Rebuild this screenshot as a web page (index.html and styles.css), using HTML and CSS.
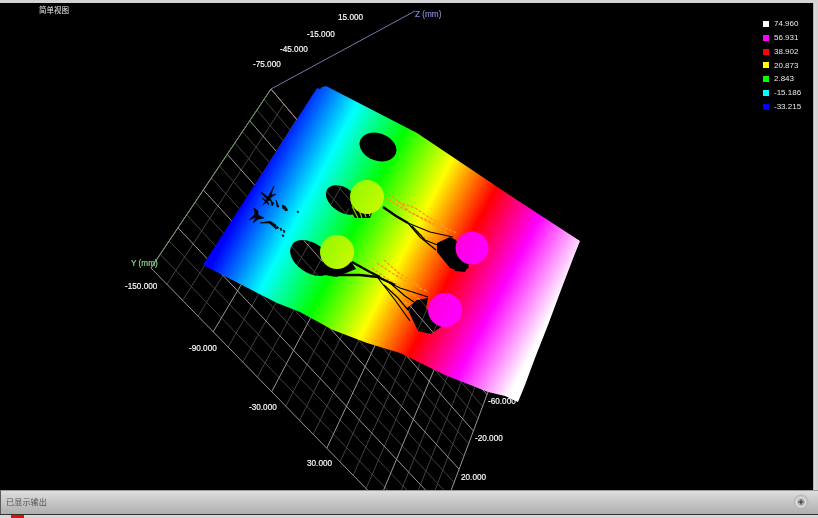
FILE: index.html
```html
<!DOCTYPE html>
<html lang="zh">
<head>
<meta charset="utf-8">
<title>简单视图</title>
<link rel="stylesheet" href="styles.css">
</head>
<body>
<div class="app">
  <div class="top-edge"></div>
  <div class="middle">
    <main class="view">
      <svg class="plot" viewBox="0 3 813 487" xmlns="http://www.w3.org/2000/svg">
        <defs>
          <linearGradient id="height" gradientUnits="userSpaceOnUse" x1="275" y1="142.6" x2="563" y2="292">
            <stop offset="0" stop-color="#0000ff"/>
            <stop offset="0.169" stop-color="#00ffff"/>
            <stop offset="0.338" stop-color="#00ff00"/>
            <stop offset="0.508" stop-color="#ffff00"/>
            <stop offset="0.668" stop-color="#ff0000"/>
            <stop offset="0.83" stop-color="#ff00ff"/>
            <stop offset="1" stop-color="#ffffff"/>
          </linearGradient>
          <linearGradient id="ballGreen" x1="0" y1="0" x2="1" y2="0.5">
            <stop offset="0" stop-color="#8cf800"/>
            <stop offset="1" stop-color="#c4fa00"/>
          </linearGradient>
          <linearGradient id="ballPink" x1="0" y1="0" x2="1" y2="0.5">
            <stop offset="0" stop-color="#ff00d8"/>
            <stop offset="1" stop-color="#ff00ff"/>
          </linearGradient>
        </defs>
        <g id="grid"></g>
        <line class="axis-z" x1="271" y1="89" x2="415" y2="11"/>
        <path class="surface" fill-rule="evenodd" d="M203 265 L317 88 L320 89 L322 87 L326 86 L417 133 L517 200 L580 241 L574 256 L561 290 L548 325 L535 358 L525 385 L518 402 L505 396 L488 392 L445 375 L400 353 L367 343 L333 330 L300 312 L277 303 L240 284 Z
          M360 141 A18 13 20 1 0 396 153 A18 13 20 1 0 360 141 Z
          M327.4 189.1 A19 12 35 1 0 358.6 210.9 A19 12 35 1 0 327.4 189.1 Z
          M292.2 244.8 A23 14 35 1 0 329.8 271.2 A23 14 35 1 0 292.2 244.8 Z
          M437 243 L450 237 L456 240 L469 268 L460 271 L450 268 L437 252 Z
          M407 308 L417 300 L428 298 L426 308 L441 327 L431 334 L418 331 Z"/>
        <path class="patch" d="M320 262 L350 260 L356 269 L336 277 L325 275 Z M347 205 L375 206 L370 218 L355 218 Z M452 262 L470 262 L465 272 L455 271 Z"/>
        <g class="streak">
          <polyline points="385,197 400,207 420,217 440,226 457,233"/>
          <polyline points="392,196 410,212 432,224 448,234"/>
          <polyline points="398,202 415,208 430,218 445,226"/>
          <polyline points="377,263 395,275 412,284 428,292"/>
          <polyline points="384,260 400,274 420,286"/>
          <polyline points="372,268 392,282 410,292 420,300"/>
          <polyline points="410,225 425,238 437,240"/>
          <polyline points="392,290 402,302 410,304"/>
        </g>
        <g class="wire-thick">
          <polyline points="383,207 396,216 408,223"/>
          <polyline points="333,275 360,275 378,277"/>
          <polyline points="352,262 370,272 380,277"/>
          <polyline points="378,277 395,285"/>
        </g>
        <g class="wire">
          <polyline points="408,223 430,232 453,237"/>
          <polyline points="408,223 420,237 436,250"/>
          <polyline points="412,226 425,240 440,246"/>
          <polyline points="378,277 400,288 428,297"/>
          <polyline points="378,278 395,300 410,321"/>
          <polyline points="384,285 398,298 408,310"/>
          <polyline points="390,283 405,296 414,302"/>
        </g>
        <g class="stripes">
          <line x1="352" y1="206" x2="358" y2="218"/>
          <line x1="357" y1="205" x2="362" y2="218"/>
          <line x1="362" y1="205" x2="366" y2="217"/>
          <line x1="367" y1="205" x2="370" y2="216"/>
        </g>
        <path class="noise" d="M274 186 L268 197 L261 192 L262 194 L267 199 L263 205 L269 200 L272 202 L270 198 L276 194 L271 195 Z
          M254 208 L255 214 L249 220 L256 217 L253 223 L258 219 L264 218 L258 215 L258 211 Z
          M262 198 L269 205 L267 201 Z M271 202 L272 206 L274 203 Z M276 200 L277 207 L279 207 Z M282 205 L283 209 L287 209 L285 206 Z
          M260 223 L270 221 L276 225 L275 228 L269 223 Z M277 226 L279 228 L275 229 Z M280 228 L282 229 L281 231 Z M283 230 L285 231 L284 233 Z M282 235 L284 235 L283 237 Z M297 211 L299 212 L298 213 Z M285 208 L288 210 L285 211 Z"/>
        <circle class="ball-green" cx="367" cy="197" r="17"/>
        <circle class="ball-green" cx="337" cy="252" r="17"/>
        <circle class="ball-pink" cx="472" cy="248" r="16.5"/>
        <circle class="ball-pink" cx="445" cy="310" r="17"/>
        <g class="tick">
          <text x="338" y="20">15.000</text>
          <text x="307" y="37">-15.000</text>
          <text x="280" y="52">-45.000</text>
          <text x="253" y="67">-75.000</text>
          <text x="125" y="289">-150.000</text>
          <text x="189" y="351">-90.000</text>
          <text x="249" y="410">-30.000</text>
          <text x="307" y="466">30.000</text>
          <text x="488" y="404">-60.000</text>
          <text x="475" y="441">-20.000</text>
          <text x="461" y="480">20.000</text>
        </g>
        <text class="label-y" x="131" y="266">Y (mm)</text>
        <text class="label-z" x="415" y="17">Z (mm)</text>
      </svg>
      <div class="view-title">简单视图</div>
      <ul class="legend">
        <li class="legend-row"><span class="swatch swatch-white"></span>74.960</li>
        <li class="legend-row"><span class="swatch swatch-magenta"></span>56.931</li>
        <li class="legend-row"><span class="swatch swatch-red"></span>38.902</li>
        <li class="legend-row"><span class="swatch swatch-yellow"></span>20.873</li>
        <li class="legend-row"><span class="swatch swatch-green"></span>2.843</li>
        <li class="legend-row"><span class="swatch swatch-cyan"></span>-15.186</li>
        <li class="legend-row"><span class="swatch swatch-blue"></span>-33.215</li>
      </ul>
    </main>
    <div class="right-edge"></div>
  </div>
  <footer class="status">
    <span class="status-text">已显示输出</span>
    <button class="expand" type="button" aria-label="展开">
      <svg class="expand-icon" viewBox="0 0 16 16" xmlns="http://www.w3.org/2000/svg">
        <circle class="expand-ring" cx="8" cy="8" r="7"/>
        <circle class="expand-core" cx="8" cy="8" r="4.4"/>
        <path class="expand-plus" d="M8 5.4 V10.6 M5.4 8 H10.6"/>
      </svg>
    </button>
  </footer>
  <div class="bottom-edge"><span class="task-mark"></span></div>
</div>
<script src="grid.js"></script>
</body>
</html>
```
FILE: styles.css
```css
* { box-sizing: border-box; }
html, body { margin: 0; padding: 0; height: 100%; background: #000; overflow: hidden; }
.app { display: flex; flex-direction: column; width: 818px; height: 518px; filter: blur(0.4px); }
.top-edge { height: 3px; background: #d4d4d4; flex: none; }
.middle { flex: 1; display: flex; min-height: 0; }
.view { flex: 1; position: relative; background: #000; overflow: hidden; }
.right-edge { width: 5px; background: linear-gradient(90deg, #8a8a8a 0, #dadada 1px, #d4d4d4 100%); flex: none; }
.plot { display: block; width: 813px; height: 487px; }

.surface { fill: url(#height); }
.patch { fill: #000; }
.axis-z { stroke: #7c76ac; stroke-width: 1; }
.grid-minor { stroke: #484848; stroke-width: 0.9; fill: none; }
.grid-major { stroke: #969696; stroke-width: 1; fill: none; }
.grid-y { stroke: #6f9466; stroke-width: 1; }
.grid-far { stroke: #a88074; stroke-width: 1; }
.streak polyline { fill: none; stroke: #ff9a10; stroke-width: 1.4; stroke-dasharray: 3 1.5; }
.wire-thick polyline { fill: none; stroke: #000; stroke-width: 2.4; }
.wire polyline { fill: none; stroke: #000; stroke-width: 1.2; }
.stripes line { stroke: #7fd000; stroke-width: 1.2; }
.noise { fill: #000; stroke: #000; stroke-width: 0.6; }
.ball-green { fill: url(#ballGreen); }
.ball-pink { fill: url(#ballPink); }

.tick text { font: 8.2px "Liberation Sans", Arial, sans-serif; fill: #fff; stroke: #fff; stroke-width: 0.15; }
.label-y { font: 8.2px "Liberation Sans", Arial, sans-serif; fill: #90e090; stroke: #90e090; stroke-width: 0.15; }
.label-z { font: 8.2px "Liberation Sans", Arial, sans-serif; fill: #8a8ad8; stroke: #8a8ad8; stroke-width: 0.15; }

.view-title {
  position: absolute; left: 39px; top: 2px;
  font: 7.5px/10px "Noto Sans CJK SC", sans-serif; color: #e8e8e8;
}
.legend {
  position: absolute; left: 763px; top: 14px;
  margin: 0; padding: 0; list-style: none;
  font: 8px/13.85px "Liberation Sans", Arial, sans-serif; color: #e8e8e8;
}
.legend-row { display: flex; align-items: center; gap: 5px; height: 13.85px; white-space: nowrap; }
.swatch { width: 6px; height: 6px; flex: none; }
.swatch-white { background: #fff; }
.swatch-magenta { background: #f0f; }
.swatch-red { background: #f00; }
.swatch-yellow { background: #ff0; }
.swatch-green { background: #0f0; }
.swatch-cyan { background: #0ff; }
.swatch-blue { background: #00f; }

.status {
  flex: none; height: 24px; display: flex; align-items: center; justify-content: space-between;
  padding: 0 9px 1px 6px;
  background: linear-gradient(180deg, #dedede 0, #cfcfcf 30%, #aeaeae 100%);
  border-top: 1px solid #9a9a9a; border-left: 1px solid #5a5a5a;
}
.status-text { font: 8.2px/12px "Noto Sans CJK SC", sans-serif; color: #555; margin: -3px 0 0 -1px; }
.expand { border: 0; padding: 0; margin: 0; background: none; width: 16px; height: 16px; display: block; }
.expand-icon { display: block; width: 16px; height: 16px; }
.expand-ring { fill: #c8c8c8; stroke: #b4b4b4; stroke-width: 1; }
.expand-core { fill: #b0b0b0; stroke: #f0f0f0; stroke-width: 0.9; }
.expand-plus { stroke: #333; stroke-width: 1.1; fill: none; }
.bottom-edge { flex: none; height: 4px; background: #d8d8d8; border-top: 1px solid #333; padding-left: 11px; }
.task-mark { display: block; width: 13px; height: 3px; background: #e01010; }
```
FILE: grid.js
```js
// Draws the floor grid of the 3D plot as a perspective projection of a unit square.
(function () {
  var A = [271, 89], D = [500, 360], C = [428, 552], B = [151, 268];
  var dx1 = D[0] - C[0], dx2 = B[0] - C[0], sx = A[0] - D[0] + C[0] - B[0];
  var dy1 = D[1] - C[1], dy2 = B[1] - C[1], sy = A[1] - D[1] + C[1] - B[1];
  var det = dx1 * dy2 - dx2 * dy1;
  var g = (sx * dy2 - dx2 * sy) / det, h = (dx1 * sy - sx * dy1) / det;
  var a = D[0] - A[0] + g * D[0], b = B[0] - A[0] + h * B[0];
  var d = D[1] - A[1] + g * D[1], e = B[1] - A[1] + h * B[1];
  function project(u, v) {
    var w = g * u + h * v + 1;
    return [(a * u + b * v + A[0]) / w, (d * u + e * v + A[1]) / w];
  }
  var layer = document.getElementById('grid');
  var NS = 'http://www.w3.org/2000/svg';
  function seg(p, q, cls) {
    var l = document.createElementNS(NS, 'line');
    l.setAttribute('x1', p[0].toFixed(1));
    l.setAttribute('y1', p[1].toFixed(1));
    l.setAttribute('x2', q[0].toFixed(1));
    l.setAttribute('y2', q[1].toFixed(1));
    l.setAttribute('class', cls);
    layer.appendChild(l);
  }
  var DIV = 5, SUB_U = 4, SUB_V = 3, i, t;
  for (i = 0; i <= DIV * SUB_U; i++) {
    if (i % SUB_U) { t = i / (DIV * SUB_U); seg(project(t, 0), project(t, 1), 'grid-minor'); }
  }
  for (i = 0; i <= DIV * SUB_V; i++) {
    if (i % SUB_V) { t = i / (DIV * SUB_V); seg(project(0, t), project(1, t), 'grid-minor'); }
  }
  for (i = 0; i <= DIV; i++) {
    t = i / DIV;
    seg(project(t, 0), project(t, 1), 'grid-major');
    seg(project(0, t), project(1, t), 'grid-major');
  }
  seg(A, B, 'grid-y');
  seg(A, D, 'grid-far');
})();
```
